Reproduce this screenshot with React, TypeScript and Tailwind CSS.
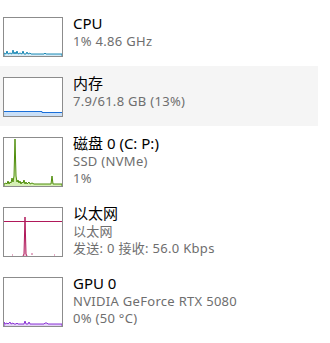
import type { ReactNode } from "react";

type Row = {
  title: string;
  lines: string[];
  active?: boolean;
  graph: ReactNode;
};

// box inner area: 58 wide, 38 (2 lines) or 48 (3 lines) tall
function CpuGraph() {
  return (
    <svg width="58" height="38" viewBox="0 0 58 38">
      <polyline
        fill="#d6eaf4"
        stroke="#1d8ab5"
        strokeWidth="1"
        points="0,38 0,35 2,36 3,33 4,36 6,35 8,36 9,32 10,36 11,34 12,36 13,33 14,36 16,35 18,36 19,33 20,36 22,36 23,34 24,36 26,35 27,36 40,36 41,35 42,36 58,36 58,38"
      />
    </svg>
  );
}

function MemGraph() {
  return (
    <svg width="58" height="38" viewBox="0 0 58 38">
      <polygon fill="#c9dff7" points="0,33 38,33 38,34 58,34 58,38 0,38" />
      <polyline fill="none" stroke="#1a6fd9" strokeWidth="1" points="0,33.5 38,33.5 38,34.5 58,34.5" />
    </svg>
  );
}

function DiskGraph() {
  return (
    <svg width="58" height="48" viewBox="0 0 58 48">
      <polyline
        fill="#d5efb4"
        stroke="#4f8d0b"
        strokeWidth="1"
        points="0,48 0,46 2,45 3,46 4,43 5,46 6,44 7,45 8,40 9,44 10,38 11,1 12,38 13,44 14,42 15,45 16,43 17,46 18,44 19,45 20,42 21,46 22,44 23,46 25,44 26,46 28,45 30,46 47,46 48,38 49,46 58,46 58,48"
      />
    </svg>
  );
}

function NetGraph() {
  return (
    <svg width="58" height="48" viewBox="0 0 58 48">
      <line x1="0" y1="13.5" x2="58" y2="13.5" stroke="#b0185a" strokeWidth="1" />
      <polyline
        fill="#f3c9dc"
        stroke="#b0185a"
        strokeWidth="1"
        points="19,48 20,46 21,9 22,46 23,48"
      />
      <line x1="27" y1="46" x2="29" y2="46" stroke="#c8578a" strokeWidth="1" />
      <line x1="8" y1="47" x2="9" y2="47" stroke="#c8578a" strokeWidth="1" />
      <line x1="50" y1="47" x2="51" y2="47" stroke="#c8578a" strokeWidth="1" />
    </svg>
  );
}

function GpuGraph() {
  return (
    <svg width="58" height="48" viewBox="0 0 58 48">
      <polyline
        fill="#e3d3f5"
        stroke="#8b34d6"
        strokeWidth="1"
        points="0,48 0,44 1,46 3,45 4,46 6,44 7,46 9,45 10,46 12,46 13,45 14,46 20,46 21,43 22,46 24,46 25,44 26,46 40,46 41,45 43,45 44,46 58,46 58,48"
      />
    </svg>
  );
}

const rows: Row[] = [
  { title: "CPU", lines: ["1% 4.86 GHz"], graph: <CpuGraph /> },
  { title: "内存", lines: ["7.9/61.8 GB (13%)"], active: true, graph: <MemGraph /> },
  { title: "磁盘 0 (C: P:)", lines: ["SSD (NVMe)", "1%"], graph: <DiskGraph /> },
  { title: "以太网", lines: ["以太网", "发送: 0 接收: 56.0 Kbps"], graph: <NetGraph /> },
  { title: "GPU 0", lines: ["NVIDIA GeForce RTX 5080", "0% (50 °C)"], graph: <GpuGraph /> },
];

export default function App() {
  return (
    <div className="w-[330px] h-[343px] bg-white overflow-hidden font-['Segoe_UI','Noto_Sans','Noto_Sans_CJK_SC',sans-serif] pt-[6px]">
      {rows.map((r) => (
        <div
          key={r.title}
          className={
            "w-[318px] flex items-start gap-[10px] pl-[3px] pt-[7px] " +
            (r.lines.length > 1 ? "h-[70px] " : "h-[60px] ") +
            (r.active ? "bg-[#f5f5f5]" : "")
          }
        >
          <div className="mt-[4px] shrink-0 w-[60px] border border-[#8c8c8c] bg-white flex">
            {r.graph}
          </div>
          <div className="flex flex-col">
            <div className="text-[15px] leading-[20px] text-black">{r.title}</div>
            {r.lines.map((l, i) => (
              <div key={i} className="text-[13px] leading-[17px] tracking-[0.3px] text-[#6e6e6e] whitespace-nowrap">
                {l}
              </div>
            ))}
          </div>
        </div>
      ))}
    </div>
  );
}
